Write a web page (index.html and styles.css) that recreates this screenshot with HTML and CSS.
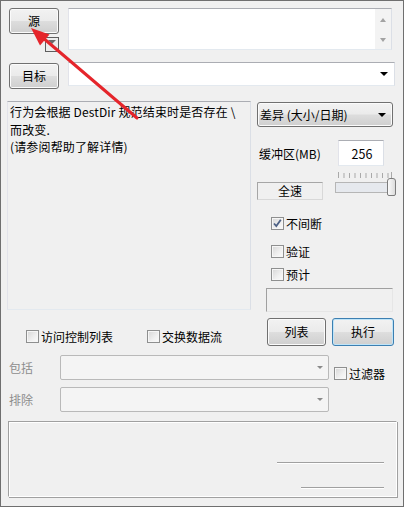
FILE: index.html
```html
<!DOCTYPE html>
<html lang="zh">
<head>
<meta charset="utf-8">
<link rel="stylesheet" href="styles.css">
</head>
<body>
<div class="window">
  <div class="r1">
    <div class="lcol">
      <button class="btn src">源</button>
      <span class="mini"><span class="mini-tri"></span></span>
    </div>
    <div class="textbox srcbox">
      <div class="sb">
        <span class="sb-up"></span>
        <span class="sb-down"></span>
      </div>
    </div>
  </div>

  <div class="r2">
    <button class="btn dst">目标</button>
    <div class="textbox destcombo"><span class="tri-black"></span></div>
  </div>

  <div class="r3">
    <div class="leftcol">
      <div class="info">行为会根据 DestDir 规范结束时是否存在 \<br>而改变.<br>(请参阅帮助了解详情)</div>
      <div class="checks">
        <label class="chk acl"><span class="cb"></span><span>访问控制列表</span></label>
        <label class="chk ads"><span class="cb"></span><span>交换数据流</span></label>
      </div>
    </div>

    <div class="rightcol">
      <div class="btncombo"><span>差异 (大小/日期)</span><span class="tri-black"></span></div>

      <div class="bufrow">
        <span class="buflabel">缓冲区(MB)</span>
        <div class="textbox bufbox">256</div>
      </div>

      <div class="sliderrow">
        <div class="speed">全速</div>
        <div class="slider">
          <svg class="ticks" width="61" height="6" viewBox="0 0 61 6">
            <g stroke="#a9a9a9" stroke-width="1">
              <line x1="3.5" y1="0" x2="3.5" y2="6"/>
              <line x1="9" y1="1" x2="9" y2="6"/>
              <line x1="14.5" y1="1" x2="14.5" y2="6"/>
              <line x1="20" y1="1" x2="20" y2="6"/>
              <line x1="25.5" y1="1" x2="25.5" y2="6"/>
              <line x1="31" y1="1" x2="31" y2="6"/>
              <line x1="36.5" y1="1" x2="36.5" y2="6"/>
              <line x1="42" y1="1" x2="42" y2="6"/>
              <line x1="47.5" y1="1" x2="47.5" y2="6"/>
              <line x1="53" y1="1" x2="53" y2="6"/>
              <line x1="56.5" y1="0" x2="56.5" y2="6"/>
            </g>
          </svg>
          <div class="track"></div>
          <div class="thumb"></div>
        </div>
      </div>

      <label class="chk c1"><span class="cb checked"><svg width="11" height="11" viewBox="0 0 11 11"><path d="M2 5.5 L4.3 8 L8.8 1.8" fill="none" stroke="#4d6185" stroke-width="1.8"/></svg></span><span>不间断</span></label>
      <label class="chk c2"><span class="cb"></span><span>验证</span></label>
      <label class="chk c3"><span class="cb"></span><span>预计</span></label>

      <div class="emptybox"></div>

      <div class="btnrow">
        <button class="btn list">列表</button>
        <button class="btn run">执行</button>
      </div>
    </div>
  </div>

  <div class="filters">
    <span class="dlabel">包括</span>
    <div class="dcombo"><span class="tri-gray"></span></div>
    <label class="chk filt"><span class="cb"></span><span>过滤器</span></label>
    <span class="dlabel">排除</span>
    <div class="dcombo"><span class="tri-gray"></span></div>
  </div>

  <div class="group">
    <div class="hline l1"></div>
    <div class="hline l2"></div>
  </div>

  <svg class="arrow" width="404" height="507" viewBox="0 0 404 507">
    <line x1="137" y1="118" x2="42" y2="37" stroke="#e5252b" stroke-width="3" stroke-linecap="round"/>
    <polygon points="31,28 49.5,34.5 40,45.5" fill="#e5252b"/>
  </svg>
</div>
</body>
</html>
```

FILE: styles.css
```css
* { box-sizing: border-box; }

body {
  margin: 0;
  font: 12px "Noto Sans CJK SC", "Noto Sans", sans-serif;
  color: #000;
  background: #f0f0f0;
}

.window {
  width: 404px;
  height: 507px;
  border: 1px solid #6f6f6f;
  background: #f0f0f0;
  position: relative;
  padding: 7px 0 0 6px;
  overflow: hidden;
}

/* buttons */
.btn {
  font: inherit;
  color: #000;
  padding: 0;
  border: 1px solid #707070;
  border-radius: 3px;
  background: linear-gradient(#f2f2f2 0%, #ebebeb 48%, #dddddd 52%, #cfcfcf 100%);
  box-shadow: inset 0 0 0 1px #fbfbfb;
  line-height: 1;
}

.textbox {
  background: #fff;
  border: 1px solid;
  border-color: #abadb3 #dbdfe6 #e3e9ef #e2e3ea;
}

/* row 1 */
.r1 {
  display: flex;
  height: 44px;
}
.lcol {
  width: 61px;
  display: flex;
  flex-direction: column;
}
.src {
  margin-left: 2px;
  width: 50px;
  height: 26px;
}
.mini {
  margin: 3px 0 0 38px;
  width: 14px;
  height: 15px;
  border: 1px solid #5e5e5e;
  background: #ececec;
  display: flex;
  justify-content: center;
  padding-top: 2px;
}
.mini-tri {
  width: 0;
  height: 0;
  border-left: 4px solid transparent;
  border-right: 4px solid transparent;
  border-top: 4px solid #6a6a6a;
}
.srcbox {
  width: 324px;
  height: 42px;
  display: flex;
  justify-content: flex-end;
}
.sb {
  width: 16px;
  background: #f3f3f3;
  display: flex;
  flex-direction: column;
  align-items: center;
  justify-content: space-between;
  padding: 9px 0 7px;
}
.sb-up, .sb-down {
  width: 0;
  height: 0;
  border-left: 3.5px solid transparent;
  border-right: 3.5px solid transparent;
}
.sb-up { border-bottom: 4px solid #a3a3a3; }
.sb-down { border-top: 4px solid #a3a3a3; }

/* row 2 */
.r2 {
  display: flex;
  align-items: flex-start;
  margin-top: 10px;
}
.dst {
  margin: 1px 0 0 2px;
  width: 50px;
  height: 26px;
}
.destcombo {
  margin-left: 9px;
  width: 327px;
  height: 24px;
  display: flex;
  align-items: center;
  justify-content: flex-end;
  padding-right: 6px;
}
.tri-black {
  width: 0;
  height: 0;
  border-left: 4px solid transparent;
  border-right: 4px solid transparent;
  border-top: 4px solid #000;
}

/* row 3 */
.r3 {
  display: flex;
  margin-top: 12px;
  height: 245px;
}
.leftcol {
  width: 244px;
}
.info {
  height: 209px;
  border: 1px solid;
  border-color: #abadb3 #dbdfe6 #e3e9ef #e2e3ea;
  background: #f0f0f0;
  padding: 1px 2px;
  line-height: 17.5px;
  letter-spacing: 0.15px;
  white-space: nowrap;
}
.checks {
  display: flex;
  margin-top: 20px;
  height: 13px;
}
.chk {
  display: flex;
  align-items: center;
  gap: 2px;
  height: 13px;
  line-height: 13px;
}
.acl { margin-left: 19px; }
.ads { margin-left: 34px; }

.cb {
  width: 13px;
  height: 13px;
  flex: none;
  border: 1px solid #8e8f8f;
  background: linear-gradient(135deg, #d6d6d6 0%, #f0f0f0 60%, #fbfbfb 100%);
  box-shadow: inset 0 0 0 1px #f6f6f6;
  display: flex;
  align-items: center;
  justify-content: center;
}
.cb svg { display: block; }

.rightcol {
  margin-left: 6px;
  width: 139px;
  display: flex;
  flex-direction: column;
}
.btncombo {
  margin-top: 1px;
  width: 136px;
  height: 25px;
  border: 1px solid #707070;
  border-radius: 3px;
  background: linear-gradient(#f2f2f2 0%, #ebebeb 48%, #dddddd 52%, #cfcfcf 100%);
  box-shadow: inset 0 0 0 1px #fbfbfb;
  display: flex;
  align-items: center;
  justify-content: space-between;
  padding: 0 6px 0 2px;
}
.bufrow {
  margin-top: 13px;
  display: flex;
  align-items: center;
  height: 26px;
}
.buflabel {
  margin-left: 2px;
  width: 79px;
}
.bufbox {
  width: 46px;
  height: 26px;
  display: flex;
  align-items: center;
  justify-content: center;
  padding-left: 2px;
  font-size: 12.5px;
}
.sliderrow {
  margin-top: 4px;
  height: 30px;
  display: flex;
}
.speed {
  margin-top: 12px;
  width: 66px;
  height: 18px;
  border: 1px solid;
  border-color: #a6a6a6 #d8d8d8 #d8d8d8 #a6a6a6;
  display: flex;
  align-items: center;
  justify-content: center;
  line-height: 1;
}
.slider {
  margin-left: 12px;
  width: 61px;
  position: relative;
  padding-top: 2px;
}
.ticks { display: block; }
.track {
  margin-top: 4px;
  width: 58px;
  height: 11px;
  border: 1px solid #b6b6b6;
  background: #e6e9ee;
}
.thumb {
  position: absolute;
  left: 52px;
  top: 8px;
  width: 9px;
  height: 18px;
  border: 1px solid #7c7c7c;
  border-radius: 3px 3px 2px 2px;
  background: linear-gradient(90deg, #fafafa, #dcdcdc);
}
.c1 { margin: 17px 0 0 14px; }
.c2 { margin: 15px 0 0 14px; }
.c3 { margin: 10px 0 0 14px; }
.emptybox {
  margin: 7px 0 0 9px;
  width: 127px;
  height: 24px;
  border: 1px solid;
  border-color: #a0a0a0 #e6e6e6 #e6e6e6 #a0a0a0;
}
.btnrow {
  margin-top: 6px;
  display: flex;
  height: 28px;
}
.list {
  margin-left: 10px;
  width: 59px;
  height: 28px;
}
.run {
  margin-left: 6px;
  width: 62px;
  height: 28px;
  border-color: #3c7fb1;
  box-shadow: inset 0 0 0 1px #bfe4f8;
}

/* filters */
.filters {
  margin-top: 9px;
  display: grid;
  grid-template-columns: 53px 269px auto;
  grid-template-rows: 25px 25px;
  row-gap: 7px;
  align-items: center;
}
.dlabel {
  margin-left: 2px;
  color: #8d8d8d;
}
.dcombo {
  height: 25px;
  border: 1px solid #b9b9b9;
  border-radius: 2px;
  background: #f4f4f4;
  display: flex;
  align-items: center;
  justify-content: flex-end;
  padding-right: 5px;
}
.tri-gray {
  width: 0;
  height: 0;
  border-left: 3px solid transparent;
  border-right: 3px solid transparent;
  border-top: 3px solid #8a8a8a;
}
.filt {
  margin-left: 5px;
  align-self: end;
}

/* group */
.group {
  margin: 9px 0 0 1px;
  width: 389px;
  height: 76px;
  border: 1px solid;
  border-color: #a0a0a0 #ffffff #ffffff #a0a0a0;
  box-shadow: inset 1px 1px 0 #ffffff, 1px 1px 0 #a0a0a0;
  display: flex;
  flex-direction: column;
  align-items: flex-end;
  padding-right: 12px;
}
.hline {
  height: 2px;
  border-top: 1px solid #a0a0a0;
  border-bottom: 1px solid #ffffff;
}
.l1 {
  margin-top: 40px;
  width: 107px;
}
.l2 {
  margin-top: 23px;
  width: 83px;
}

.arrow {
  position: absolute;
  left: -1px;
  top: -1px;
  pointer-events: none;
}
```
